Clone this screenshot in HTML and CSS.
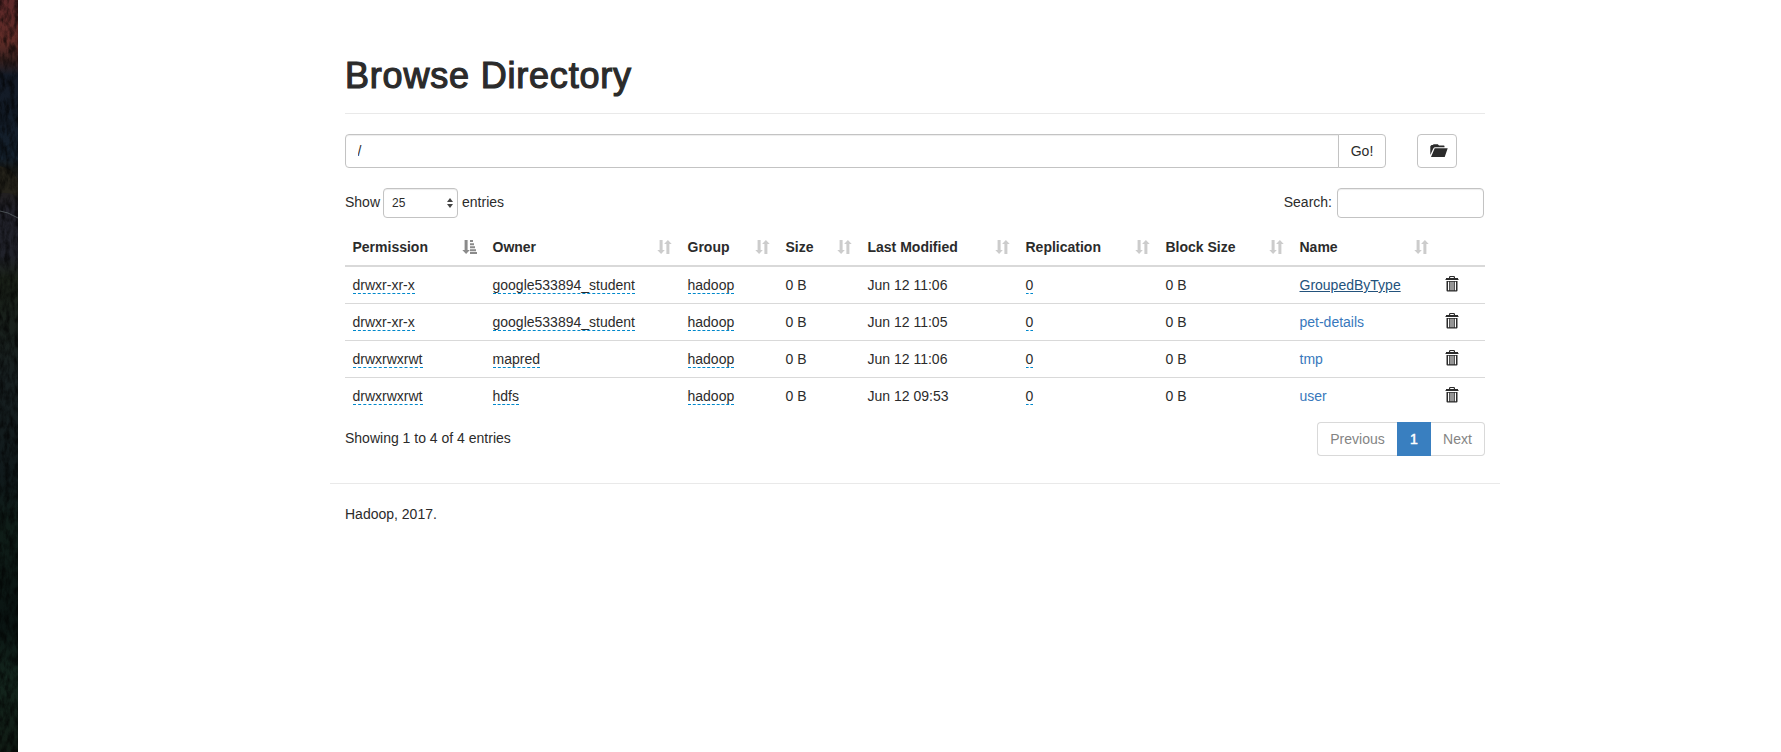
FILE: index.html
```html
<!DOCTYPE html>
<html lang="en">
<head>
<meta charset="utf-8">
<title>Browsing HDFS</title>
<link rel="stylesheet" href="styles.css">
</head>
<body>
<svg class="defs" width="0" height="0" aria-hidden="true">
  <symbol id="sort" viewBox="0 0 15 14"><path d="M2.6 0h3v10h2.2L4.1 14 .3 10h2.3zM9.400 14h3V4h2.300L10.900 0 7.100 4h2.300z"/></symbol>
  <symbol id="sort-asc" viewBox="0 0 15 14"><path d="M2.600 0h3v10h2.200L4.100 14 .3 10h2.300zM8 0h3v2H8zM8 3.300h4v2H8zM8 6.300h5v2H8zM8 9.200h6v2H8zM8 12h7v2H8z"/></symbol>
  <symbol id="trash" viewBox="0 0 14 16"><path fill-rule="evenodd" d="M4 2V1.200Q4 0 5.200 0h3.600Q10 0 10 1.200V2h3v1H1V2zM5.200 2h3.600V1.100H5.200zM.5 3h13v1H.5zM1.500 5h11v9.500q0 1-1 1h-9q-1 0-1-1zM3 5.800v8.400h1.200V5.800zM5.500 5.800v8.400h1V5.800zM7.500 5.800v8.400h1V5.800zM9.800 5.800v8.400H11V5.800z"/></symbol>
</svg>
<div class="shell">
<svg class="wallpaper" viewBox="0 0 18 752" preserveAspectRatio="none" aria-hidden="true">
  <defs>
    <linearGradient id="land" x1="0" y1="0" x2="0" y2="1">
      <stop offset="0" stop-color="#5c2829"/><stop offset=".055" stop-color="#602c27"/><stop offset=".08" stop-color="#38211f"/>
      <stop offset=".1" stop-color="#131a26"/><stop offset=".21" stop-color="#14202c"/><stop offset=".225" stop-color="#181a18"/>
      <stop offset=".25" stop-color="#211e1c"/><stop offset=".28" stop-color="#22222b"/><stop offset=".34" stop-color="#20222a"/>
      <stop offset=".37" stop-color="#1a2118"/><stop offset=".5" stop-color="#171f20"/><stop offset=".63" stop-color="#10191b"/>
      <stop offset=".7" stop-color="#0f1d18"/><stop offset=".83" stop-color="#0a1412"/><stop offset=".9" stop-color="#13251d"/><stop offset="1" stop-color="#101b14"/>
    </linearGradient>
    <filter id="rock" x="0" y="0" width="1" height="1">
      <feTurbulence type="fractalNoise" baseFrequency=".2 .09" numOctaves="4" seed="4"/>
      <feColorMatrix values="0 0 0 0 0  0 0 0 0 0  0 0 0 0 0  2.500 0 0 0 -.9"/>
    </filter>
  </defs>
  <rect width="18" height="752" fill="url(#land)"/>
  <path d="M0 166q11 2 18 14v16q-9-4-18-3z" fill="#25231b"/>
  <rect width="18" height="752" filter="url(#rock)" opacity=".6"/>
  <path d="M0 211l8 2 10 5" fill="none" stroke="#596064" stroke-width="1" opacity=".8"/>
</svg>
<main class="container">
  <header class="page-header"><h1>Browse Directory</h1></header>
  <div class="path-row">
    <div class="path-group"><input class="control path" value="/"><button class="btn go">Go!</button></div>
    <button class="btn folder" aria-label="Parent directory"><svg width="18" height="14" viewBox="0 0 18 14"><path d="M.3 11V2.200L1.500 1h1.200L3.700.2h4.100L9 1.500h4.800q.7 0 .7.700v1H5.200q-1.300 0-1.900 1.300zM4.700 4.200h13L14.700 13H1z"/></svg></button>
  </div>
  <div class="tools">
    <label class="length">Show <span class="control select">25<svg width="6" height="10" viewBox="0 0 6 10"><path d="M0 4l3-4 3 4zM0 6h6l-3 4z"/></svg></span> entries</label>
    <label class="search">Search: <input class="control"></label>
  </div>
  <table>
    <colgroup><col class="c-perm"><col class="c-owner"><col class="c-group"><col class="c-size"><col class="c-mod"><col class="c-rep"><col class="c-block"><col class="c-name"><col></colgroup>
    <thead><tr>
      <th><div>Permission<svg class="asc"><use href="#sort-asc"/></svg></div></th>
      <th><div>Owner<svg><use href="#sort"/></svg></div></th>
      <th><div>Group<svg><use href="#sort"/></svg></div></th>
      <th><div>Size<svg><use href="#sort"/></svg></div></th>
      <th><div>Last Modified<svg><use href="#sort"/></svg></div></th>
      <th><div>Replication<svg><use href="#sort"/></svg></div></th>
      <th><div>Block Size<svg><use href="#sort"/></svg></div></th>
      <th><div>Name<svg><use href="#sort"/></svg></div></th>
      <th></th>
    </tr></thead>
    <tbody>
      <tr><td><span class="edit">drwxr-xr-x</span></td><td><span class="edit">google533894_student</span></td><td><span class="edit">hadoop</span></td><td>0 B</td><td>Jun 12 11:06</td><td><span class="edit">0</span></td><td>0 B</td><td><a class="hover">GroupedByType</a></td><td><svg class="trash"><use href="#trash"/></svg></td></tr>
      <tr><td><span class="edit">drwxr-xr-x</span></td><td><span class="edit">google533894_student</span></td><td><span class="edit">hadoop</span></td><td>0 B</td><td>Jun 12 11:05</td><td><span class="edit">0</span></td><td>0 B</td><td><a>pet-details</a></td><td><svg class="trash"><use href="#trash"/></svg></td></tr>
      <tr><td><span class="edit">drwxrwxrwt</span></td><td><span class="edit">mapred</span></td><td><span class="edit">hadoop</span></td><td>0 B</td><td>Jun 12 11:06</td><td><span class="edit">0</span></td><td>0 B</td><td><a>tmp</a></td><td><svg class="trash"><use href="#trash"/></svg></td></tr>
      <tr><td><span class="edit">drwxrwxrwt</span></td><td><span class="edit">hdfs</span></td><td><span class="edit">hadoop</span></td><td>0 B</td><td>Jun 12 09:53</td><td><span class="edit">0</span></td><td>0 B</td><td><a>user</a></td><td><svg class="trash"><use href="#trash"/></svg></td></tr>
    </tbody>
  </table>
  <div class="summary">
    <div>Showing 1 to 4 of 4 entries</div>
    <nav class="pages"><span class="prev">Previous</span><span class="active">1</span><span class="next">Next</span></nav>
  </div>
  <hr>
  <footer>Hadoop, 2017.</footer>
</main>
</div>
</body>
</html>
```
FILE: styles.css
```css
* { box-sizing: border-box; }
body { margin: 0; background: #fff; color: #2b2b2b; font: 14px/20px "Liberation Sans", Arial, sans-serif; overflow: hidden; }
.defs { position: absolute; }
.shell { display: flex; height: 752px; }
.wallpaper { flex: none; width: 18px; height: 752px; }
.container { width: 1170px; margin-left: 312px; padding: 0 15px; }
.page-header { height: 114px; padding-top: 56px; border-bottom: 1px solid #e9e9e9; }
h1 { margin: 0; font-size: 36px; line-height: 40px; font-weight: 400; letter-spacing: .8px; -webkit-text-stroke: 1.2px #2b2b2b; white-space: nowrap; }
.path-row { display: flex; margin-top: 20px; }
.path-group { display: flex; width: 1041px; }
.control { border: 1px solid #c3c3c3; border-radius: 4px; background: #fff; color: #2b2b2b; font: inherit; box-shadow: inset 0 1px 1px rgba(0,0,0,.075); outline: 0; }
.path { width: 994px; height: 34px; padding: 6px 11.5px; border-radius: 4px 0 0 4px; }
.btn { height: 34px; border: 1px solid #c3c3c3; border-radius: 4px; background: #fff; color: #2b2b2b; font: inherit; padding: 0; }
.go { width: 48px; margin-left: -1px; border-radius: 0 4px 4px 0; }
.folder { display: flex; width: 40px; margin-left: 31px; padding: 9px 0 0 12px; }
.folder svg { fill: #2b2b2b; }
.tools { display: flex; justify-content: space-between; margin-top: 20px; height: 30px; }
.tools label { display: flex; align-items: center; height: 28px; }
.select { display: flex; align-items: center; justify-content: space-between; width: 75px; height: 30px; margin: 2px 4px 0 3px; padding: 0 4px 0 8px; font-size: 12px; }
.select svg { fill: #444; }
.search input { width: 147px; height: 30px; margin: 2px 1px 0 5px; }
table { width: 1140px; margin-top: 11px; border-spacing: 0; table-layout: fixed; }
.c-perm { width: 140px; }
.c-owner { width: 195px; }
.c-group { width: 98px; }
.c-size { width: 82px; }
.c-mod { width: 158px; }
.c-rep { width: 140px; }
.c-block { width: 134px; }
.c-name { width: 145px; }
th, td { padding: 8px 8px 8px 7.5px; text-align: left; white-space: nowrap; }
th { height: 38px; border-bottom: 2px solid #d9d9d9; }
th div { display: flex; justify-content: space-between; height: 20px; }
th svg { width: 15px; height: 14px; margin-top: 3px; fill: #ccc; }
th .asc { fill: #8b8b8b; }
td { height: 37px; border-top: 1px solid #d9d9d9; }
tbody tr:first-child td { height: 36px; border-top: 0; }
.edit { border-bottom: 1px dashed #08c; }
a { color: #3878bc; }
.hover { color: #23527c; text-decoration: underline; }
.trash { display: block; width: 14px; height: 16px; margin: 1px 0 3px .5px; fill: #2b2b2b; }
.summary { display: flex; justify-content: space-between; padding-top: 8px; height: 69px; }
.summary > div { padding-top: 6px; }
.pages { display: flex; height: 34px; line-height: 20px; }
.pages span { height: 34px; border: 1px solid #d9d9d9; color: #848484; padding: 6px 0; text-align: center; }
.pages .prev { width: 80px; border-right: 0; border-radius: 4px 0 0 4px; }
.pages .active { width: 34px; background: #397fc0; border-color: #397fc0; color: #fff; -webkit-text-stroke: .5px #fff; }
.pages .next { width: 54px; border-left: 0; border-radius: 0 4px 4px 0; }
hr { margin: 0 -15px; border: 0; border-top: 1px solid #e9e9e9; }
footer { padding-top: 20px; }
```
